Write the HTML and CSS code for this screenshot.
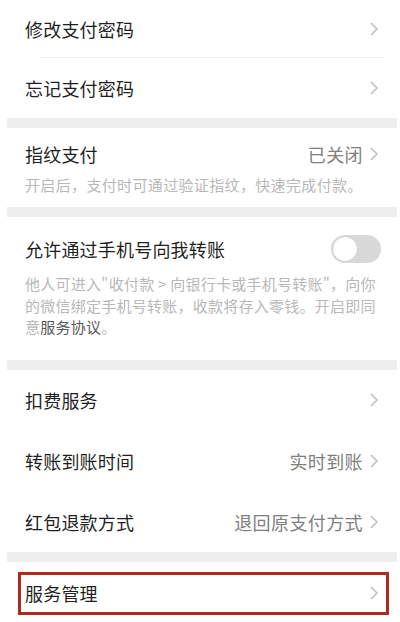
FILE: index.html
```html
<!DOCTYPE html>
<html lang="zh">
<head>
<meta charset="utf-8">
<link rel="stylesheet" href="styles.css">
</head>
<body>
<div class="page">
  <section class="group">
    <div class="row row-first"><span class="title">修改支付密码</span><span class="right"><svg class="chev" viewBox="0 0 8 14"><polyline points="1,1 7,7 1,13"/></svg></span></div>
    <div class="divider"></div>
    <div class="row"><span class="title">忘记支付密码</span><span class="right"><svg class="chev" viewBox="0 0 8 14"><polyline points="1,1 7,7 1,13"/></svg></span></div>
  </section>
  <div class="band"></div>
  <section class="group block finger">
    <div class="block-head"><span class="title">指纹支付</span><span class="right"><span class="value">已关闭</span><svg class="chev" viewBox="0 0 8 14"><polyline points="1,1 7,7 1,13"/></svg></span></div>
    <p class="note">开启后，支付时可通过验证指纹，快速完成付款。</p>
  </section>
  <div class="band"></div>
  <section class="group block phone">
    <div class="block-head"><span class="title">允许通过手机号向我转账</span><span class="toggle"><span class="knob"></span></span></div>
    <p class="note multi">他人可进入"收付款 &gt; 向银行卡或手机号转账"，向你<br>的微信绑定手机号转账，收款将存入零钱。开启即同<br>意<span class="link">服务协议</span>。</p>
  </section>
  <div class="band"></div>
  <section class="group">
    <div class="row r61"><span class="title">扣费服务</span><span class="right"><svg class="chev" viewBox="0 0 8 14"><polyline points="1,1 7,7 1,13"/></svg></span></div>
    <div class="row r61"><span class="title">转账到账时间</span><span class="right"><span class="value">实时到账</span><svg class="chev" viewBox="0 0 8 14"><polyline points="1,1 7,7 1,13"/></svg></span></div>
    <div class="row"><span class="title">红包退款方式</span><span class="right"><span class="value">退回原支付方式</span><svg class="chev" viewBox="0 0 8 14"><polyline points="1,1 7,7 1,13"/></svg></span></div>
  </section>
  <div class="band"></div>
  <section class="group last">
    <div class="row highlight"><span class="title">服务管理</span><span class="right"><svg class="chev" viewBox="0 0 8 14"><polyline points="1,1 7,7 1,13"/></svg></span></div>
  </section>
</div>
</body>
</html>
```
FILE: styles.css
```css
html, body {
  margin: 0;
  padding: 0;
  background: #ffffff;
}
body {
  font-family: "Noto Sans CJK SC", "Noto Sans", sans-serif;
  color: #1a1a1a;
  height: 622px;
  overflow: hidden;
}
.page {
  margin: 0 3px 0 7px;
  background: #ffffff;
}
.group {
  background: #ffffff;
}
.band {
  height: 10px;
  background: #eeeeee;
}
.row {
  display: flex;
  align-items: center;
  justify-content: space-between;
  height: 60px;
  padding: 0 19px 0 18px;
}
.row-first {
  height: 57px;
}
.r61 {
  height: 61px;
}
.divider {
  height: 1px;
  background: #f0f0f0;
  margin: 0 14px 0 33px;
}
.title {
  font-size: 18px;
  line-height: 26px;
  color: #1f1f1f;
  letter-spacing: 0.2px;
}
.right {
  display: flex;
  align-items: center;
  gap: 7px;
}
.value {
  font-size: 18px;
  line-height: 26px;
  color: #808080;
  letter-spacing: 0.4px;
}
.chev {
  width: 8px;
  height: 14px;
  fill: none;
  stroke: #bdbdbd;
  stroke-width: 1.5;
}
.block {
  padding: 0 19px 0 18px;
}
.block-head {
  display: flex;
  align-items: center;
  justify-content: space-between;
}
.finger {
  padding-top: 13px;
  padding-bottom: 11px;
}
.phone {
  padding-top: 18px;
  padding-bottom: 22px;
}
.note {
  margin: 7px 0 0;
  font-size: 15px;
  line-height: 22px;
  color: #b8b8b8;
  white-space: nowrap;
  letter-spacing: 0.35px;
}
.multi {
  margin-top: 10px;
  line-height: 21.5px;
  letter-spacing: 0.25px;
}
.link {
  color: #5a5a5a;
}
.toggle {
  position: relative;
  width: 50px;
  height: 28px;
  border-radius: 14px;
  background: #d8d8d8;
  margin-right: -3px;
}
.knob {
  position: absolute;
  left: 1px;
  top: 1px;
  width: 24px;
  height: 24px;
  border-radius: 50%;
  background: #ffffff;
  border: 1px solid #d0d0d0;
}
.last {
  padding-top: 10px;
  height: 52px;
}
.highlight {
  height: 43px;
  box-sizing: border-box;
  margin: 0 8px 0 11px;
  padding: 0 8px 0 4px;
  border: 3px solid #b0281e;
}
```
